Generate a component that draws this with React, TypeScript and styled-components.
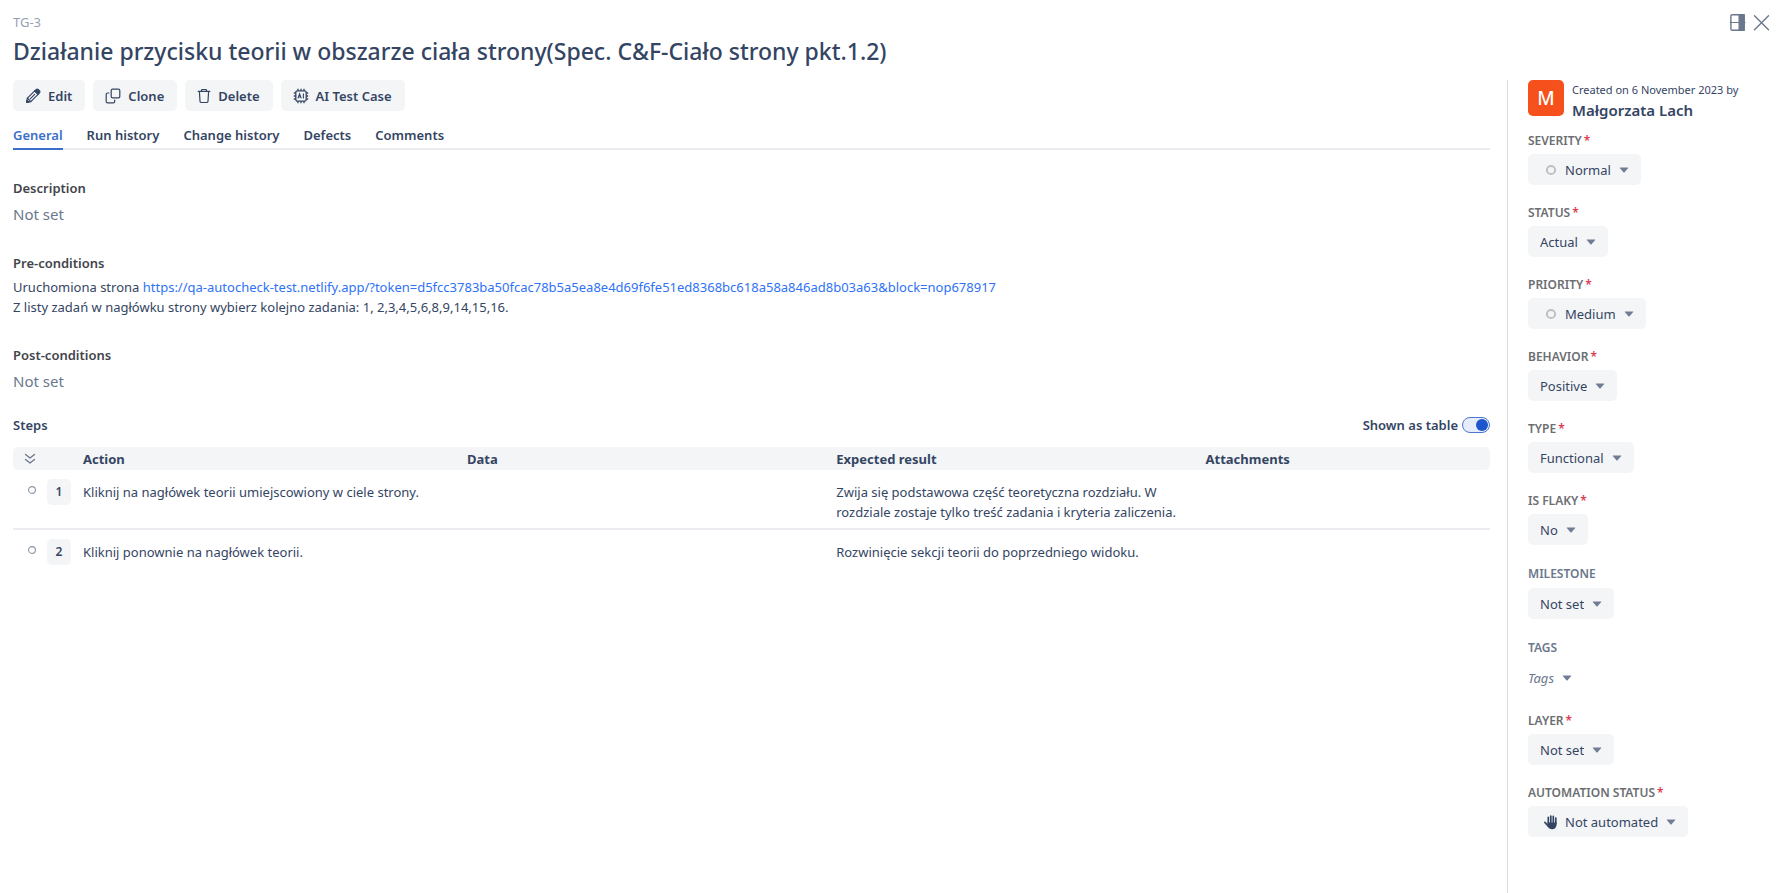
import React, { useId, useState } from "react";
import styled, { createGlobalStyle, css } from "styled-components";

const color = {
  text: "#344563",
  muted: "#6b778c",
  faint: "#97a0af",
  neutral: "#6c6e72",
  surface: "#f4f5f7",
  line: "#ebecf0",
  link: "#2f72f5",
  active: "#3b6fc9",
  danger: "#de3a50",
};

const GlobalStyle = createGlobalStyle`
  *, *::before, *::after { box-sizing: border-box; }
  body {
    margin: 0;
    background: #fff;
    color: ${color.text};
    font: 400 13px/20px "Noto Sans", "Open Sans", sans-serif;
  }
  button, input, select { font: inherit; color: inherit; }
  svg { display: block; }
`;

const Page = styled.div`
  display: flex;
  flex-direction: column;
  min-height: 100vh;
`;

const Header = styled.header`
  display: flex;
  justify-content: space-between;
  align-items: flex-start;
  padding: 12px 9px 13px 13px;
`;

const CaseId = styled.div`
  color: ${color.faint};
`;

const Title = styled.h1`
  margin: 3px 0 0;
  font-size: 23px;
  line-height: 32px;
  font-weight: 500;
`;

const WindowActions = styled.div`
  display: flex;
  gap: 7px;
`;

const IconButton = styled.button`
  display: flex;
  padding: 0;
  border: 0;
  background: none;
  color: ${color.muted};
  cursor: pointer;
`;

const Body = styled.div`
  flex: 1;
  display: grid;
  grid-template-columns: minmax(0, 1fr) 272px;
`;

const Main = styled.main`
  padding: 0 17px 24px 13px;
`;

const Toolbar = styled.div`
  display: flex;
  gap: 8px;
`;

const ToolButton = styled.button`
  display: flex;
  align-items: center;
  gap: 7px;
  height: 31px;
  padding: 0 13px 0 12px;
  border: 0;
  border-radius: 5px;
  background: ${color.surface};
  font-weight: 600;
  cursor: pointer;
`;

const Tabs = styled.nav`
  display: flex;
  gap: 24px;
  margin-top: 14px;
  border-bottom: 2px solid ${color.line};
`;

const Tab = styled.a<{ $active?: boolean }>`
  margin-bottom: -2px;
  padding-bottom: 3px;
  border-bottom: 2px solid ${(p) => (p.$active ? color.active : "transparent")};
  color: ${(p) => (p.$active ? color.active : color.text)};
  font-weight: 600;
  text-decoration: none;
`;

const Section = styled.section`
  margin-top: 28px;
`;

const SectionTitle = styled.h2`
  margin: 0;
  color: #42454b;
  font-size: 13px;
  line-height: 20px;
  font-weight: 600;
`;

const Empty = styled.p`
  margin: 5px 0 0;
  color: ${color.muted};
  font-size: 15px;
  line-height: 22px;
`;

const Paragraph = styled.p`
  margin: 4px 0 0;
`;

const Link = styled.a`
  color: ${color.link};
  text-decoration: none;
`;

const StepsBar = styled.div`
  display: flex;
  justify-content: space-between;
  align-items: center;
  margin-top: 23px;
`;

const StepsTitle = styled(SectionTitle)`
  color: ${color.text};
`;

const SwitchLabel = styled.label`
  display: flex;
  align-items: center;
  gap: 4px;
  font-weight: 600;
`;

const Switch = styled.input`
  appearance: none;
  display: flex;
  align-items: center;
  width: 28px;
  height: 16px;
  margin: 0;
  padding: 0 1px;
  border: 1px solid #4a76d4;
  border-radius: 8px;
  background: #e6ecfa;
  cursor: pointer;

  &::before {
    content: "";
    width: 12px;
    height: 12px;
    border-radius: 6px;
    background: #1d55cf;
  }
  &:checked { justify-content: flex-end; }
`;

const StepTable = styled.table`
  width: 100%;
  margin-top: 12px;
  table-layout: fixed;
  border-collapse: separate;
  border-spacing: 0;
`;

const Th = styled.th<{ $width?: string }>`
  width: ${(p) => p.$width ?? "auto"};
  height: 23px;
  padding: 0;
  background: ${color.surface};
  font-weight: 700;
  text-align: left;

  &:first-child { border-radius: 5px 0 0 5px; }
  &:last-child { border-radius: 0 5px 5px 0; }
`;

const Td = styled.td<{ $kind?: "toggle" | "number" }>`
  padding: 12px 0 6px;
  vertical-align: top;

  tr:not(:last-child) > & { border-bottom: 2px solid ${color.line}; }

  ${(p) => p.$kind === "toggle" && css`padding: 14px 0 0 13px;`}
  ${(p) => p.$kind === "number" && css`padding: 9px 0 6px;`}
`;

const HeadIcon = styled(IconButton)`
  padding-left: 10px;
`;

const StepNumber = styled.div`
  width: 24px;
  height: 26px;
  border-radius: 5px;
  background: ${color.surface};
  font-size: 12px;
  line-height: 26px;
  font-weight: 600;
  text-align: center;
`;

const Sidebar = styled.aside`
  padding: 0 8px 24px 20px;
  border-left: 1px solid #dcdee2;
`;

const Author = styled.div`
  display: flex;
  gap: 8px;
  margin-bottom: 13px;
`;

const Avatar = styled.div`
  width: 36px;
  height: 36px;
  border-radius: 5px;
  background: #f6511d;
  color: #fff;
  font-size: 19px;
  line-height: 36px;
  font-weight: 500;
  text-align: center;
`;

const Created = styled.div`
  font-size: 11px;
`;

const AuthorName = styled.div`
  font-size: 15px;
  font-weight: 600;
`;

const FieldBox = styled.div`
  margin-bottom: 20px;
`;

const FieldLabel = styled.label<{ $required: boolean }>`
  display: block;
  color: ${(p) => (p.$required ? color.neutral : color.muted)};
  font-size: 12px;
  line-height: ${(p) => (p.$required ? 16 : 18)}px;
  font-weight: 600;
  text-transform: uppercase;
`;

const Star = styled.span`
  margin-left: 2px;
  color: ${color.danger};
`;

const SelectBox = styled.div`
  display: inline-grid;
  align-items: center;
  margin-top: 5px;
  vertical-align: top;

  > * { grid-area: 1 / 1; }
`;

const Select = styled.select<{ $icon: boolean; $plain: boolean }>`
  appearance: none;
  field-sizing: content;
  height: 31px;
  padding: 0 30px 0 ${(p) => (p.$plain ? 0 : p.$icon ? 37 : 12)}px;
  border: 0;
  border-radius: 5px;
  background: ${(p) => (p.$plain ? "transparent" : color.surface)};
  ${(p) => p.$plain && css`color: ${color.muted}; font-style: italic;`}
  cursor: pointer;
`;

const Lead = styled.span`
  display: flex;
  margin-left: 15px;
  pointer-events: none;
`;

const Caret = styled.svg`
  justify-self: end;
  margin-right: 12px;
  fill: #707d95;
  pointer-events: none;
`;

const EditIcon = () => (
  <svg width="16" height="16" viewBox="0 0 16 16" fill="none" stroke="currentColor" strokeWidth="1.2" strokeLinejoin="round" strokeLinecap="round">
    <path d="M1.6 14.4l.8-4.2 7.3-7.3 3.4 3.4-7.3 7.3z" />
    <path d="M9.7 2.9l1.4-1.3a1.6 1.6 0 0 1 2.2 0l1.1 1.1a1.6 1.6 0 0 1 0 2.2l-1.3 1.4z" fill="currentColor" />
    <path d="M5.2 10.8l4.5-4.5M2.4 10.2l3.4 3.4" />
    <path d="M1.6 14.4l.5-2.3 1.8 1.8z" fill="currentColor" />
  </svg>
);

const CloneIcon = () => (
  <svg width="16" height="16" viewBox="0 0 16 16" fill="none" stroke="currentColor" strokeWidth="1.2">
    <rect x="6.2" y="1.2" width="8.6" height="8.6" rx="1.4" />
    <path d="M3.9 5H2.6a1.4 1.4 0 0 0-1.4 1.4v7a1.4 1.4 0 0 0 1.4 1.4h5.7a1.4 1.4 0 0 0 1.4-1.4v-1.3" strokeLinecap="round" />
  </svg>
);

const DeleteIcon = () => (
  <svg width="14" height="16" viewBox="0 0 14 16" fill="none" stroke="currentColor" strokeWidth="1.2" strokeLinecap="round" strokeLinejoin="round">
    <path d="M1.2 3.4h11.6M4.2 3.4l.6-1.9h4.4l.6 1.9M2.4 3.4l.6 9.8a1.4 1.4 0 0 0 1.4 1.3h5.2a1.4 1.4 0 0 0 1.4-1.3l.6-9.8" />
  </svg>
);

const ChipIcon = () => (
  <svg width="16" height="16" viewBox="0 0 16 16" fill="none" stroke="currentColor" strokeWidth="1.3">
    <rect x="2.8" y="2.8" width="10.4" height="10.4" rx="1.6" />
    <path d="M5 .8v2M8 .8v2M11 .8v2M5 13.2v2M8 13.2v2M11 13.2v2M.8 5h2M.8 8h2M.8 11h2M13.2 5h2M13.2 8h2M13.2 11h2" />
    <path d="M4.9 10.4l1.7-4.6 1.7 4.6M5.5 9h2.2M10.4 5.6v4.9" strokeWidth="1.1" />
  </svg>
);

const PanelIcon = () => (
  <svg width="17" height="20" viewBox="0 0 17 20" fill="none" stroke="currentColor" strokeWidth="1.4">
    <rect x="1.9" y="2.8" width="13.2" height="15.4" rx="1.2" />
    <path d="M10.2 2.8h4.9v15.4h-4.9z" fill="currentColor" />
    <path d="M.8 10.5H10M15 10.5h1.5" strokeWidth="1" />
  </svg>
);

const CloseIcon = () => (
  <svg width="17" height="20" viewBox="0 0 17 20" fill="none" stroke="currentColor" strokeWidth="1.4" strokeLinecap="round">
    <path d="M1.5 3.8l14 14M15.5 3.8l-14 14" />
  </svg>
);

const ExpandIcon = () => (
  <svg width="14" height="14" viewBox="0 0 14 14" fill="none" stroke="currentColor" strokeWidth="1.3" strokeLinecap="round" strokeLinejoin="round">
    <path d="M2.5 2.5L7 6l4.5-3.5M2.5 7.5L7 11l4.5-3.5" />
  </svg>
);

const StepIcon = () => (
  <svg width="12" height="12" viewBox="0 0 12 12" fill="none" stroke="#8993a4" strokeWidth="1.1">
    <circle cx="6" cy="6" r="3.4" />
  </svg>
);

const RingIcon = () => (
  <svg width="16" height="16" viewBox="0 0 16 16" fill="none" stroke="#bfc0c2" strokeWidth="2">
    <circle cx="8" cy="8" r="4.1" />
  </svg>
);

const HandIcon = () => (
  <svg width="16" height="16" viewBox="0 0 16 16" fill="none" stroke="currentColor" strokeWidth="1.7" strokeLinecap="round">
    <path d="M5.3 3.3V9M7.8 2V9M10.3 2.3V9M12.8 4V9.5M1.9 8.4l3 3.4" />
    <path d="M4.5 8.5h9.1v1.7c0 3-1.8 5-4.6 5-2.2 0-3.4-.9-4.5-2.6z" fill="currentColor" stroke="none" />
  </svg>
);

type FieldProps = {
  label: string;
  value: string;
  required?: boolean;
  plain?: boolean;
  icon?: React.ReactNode;
};

function Field({ label, value, required = false, plain = false, icon }: FieldProps) {
  const id = useId();
  return (
    <FieldBox>
      <FieldLabel htmlFor={id} $required={required}>
        {label}
        {required && <Star>*</Star>}
      </FieldLabel>
      <SelectBox>
        <Select id={id} $icon={Boolean(icon)} $plain={plain}>
          <option>{value}</option>
        </Select>
        {icon && <Lead>{icon}</Lead>}
        <Caret width="10" height="6" viewBox="0 0 10 6">
          <path d="M1.2.4h7.6q.9 0 .4.7L5.6 5.3q-.6.6-1.2 0L.8 1.1Q.3.4 1.2.4z" />
        </Caret>
      </SelectBox>
    </FieldBox>
  );
}

const tools = [
  { label: "Edit", icon: <EditIcon /> },
  { label: "Clone", icon: <CloneIcon /> },
  { label: "Delete", icon: <DeleteIcon /> },
  { label: "AI Test Case", icon: <ChipIcon /> },
];

const tabs = ["General", "Run history", "Change history", "Defects", "Comments"];

const steps = [
  {
    action: "Kliknij na nagłówek teorii umiejscowiony w ciele strony.",
    expected:
      "Zwija się podstawowa część teoretyczna rozdziału. W rozdziale zostaje tylko treść zadania i kryteria zaliczenia.",
  },
  {
    action: "Kliknij ponownie na nagłówek teorii.",
    expected: "Rozwinięcie sekcji teorii do poprzedniego widoku.",
  },
];

const fields: FieldProps[] = [
  { label: "Severity", value: "Normal", required: true, icon: <RingIcon /> },
  { label: "Status", value: "Actual", required: true },
  { label: "Priority", value: "Medium", required: true, icon: <RingIcon /> },
  { label: "Behavior", value: "Positive", required: true },
  { label: "Type", value: "Functional", required: true },
  { label: "Is flaky", value: "No", required: true },
  { label: "Milestone", value: "Not set" },
  { label: "Tags", value: "Tags", plain: true },
  { label: "Layer", value: "Not set", required: true },
  { label: "Automation status", value: "Not automated", required: true, icon: <HandIcon /> },
];

const caseUrl =
  "https://qa-autocheck-test.netlify.app/?token=d5fcc3783ba50fcac78b5a5ea8e4d69f6fe51ed8368bc618a58a846ad8b03a63&block=nop678917";

export default function App() {
  const [asTable, setAsTable] = useState(true);

  return (
    <>
      <GlobalStyle />
      <Page>
        <Header>
          <div>
            <CaseId>TG-3</CaseId>
            <Title>Działanie przycisku teorii w obszarze ciała strony(Spec. C&amp;F-Ciało strony pkt.1.2)</Title>
          </div>
          <WindowActions>
            <IconButton aria-label="Toggle side panel"><PanelIcon /></IconButton>
            <IconButton aria-label="Close"><CloseIcon /></IconButton>
          </WindowActions>
        </Header>
        <Body>
          <Main>
            <Toolbar>
              {tools.map((t) => (
                <ToolButton key={t.label}>{t.icon}{t.label}</ToolButton>
              ))}
            </Toolbar>
            <Tabs>
              {tabs.map((t, i) => (
                <Tab key={t} href="#" $active={i === 0}>{t}</Tab>
              ))}
            </Tabs>
            <Section>
              <SectionTitle>Description</SectionTitle>
              <Empty>Not set</Empty>
            </Section>
            <Section>
              <SectionTitle>Pre-conditions</SectionTitle>
              <Paragraph>
                Uruchomiona strona <Link href={caseUrl}>{caseUrl}</Link>
                <br />Z listy zadań w nagłówku strony wybierz kolejno zadania: 1, 2,3,4,5,6,8,9,14,15,16.
              </Paragraph>
            </Section>
            <Section>
              <SectionTitle>Post-conditions</SectionTitle>
              <Empty>Not set</Empty>
            </Section>
            <StepsBar>
              <StepsTitle>Steps</StepsTitle>
              <SwitchLabel>
                Shown as table
                <Switch
                  type="checkbox"
                  role="switch"
                  checked={asTable}
                  onChange={(e) => setAsTable(e.target.checked)}
                />
              </SwitchLabel>
            </StepsBar>
            <StepTable>
              <thead>
                <tr>
                  <Th $width="34px"><HeadIcon aria-label="Expand all"><ExpandIcon /></HeadIcon></Th>
                  <Th $width="36px" />
                  <Th $width="26%">Action</Th>
                  <Th $width="25%">Data</Th>
                  <Th $width="25%">Expected result</Th>
                  <Th>Attachments</Th>
                </tr>
              </thead>
              <tbody>
                {steps.map((s, i) => (
                  <tr key={s.action}>
                    <Td $kind="toggle"><StepIcon /></Td>
                    <Td $kind="number"><StepNumber>{i + 1}</StepNumber></Td>
                    <Td>{s.action}</Td>
                    <Td />
                    <Td>{s.expected}</Td>
                    <Td />
                  </tr>
                ))}
              </tbody>
            </StepTable>
          </Main>
          <Sidebar>
            <Author>
              <Avatar>M</Avatar>
              <div>
                <Created>Created on 6 November 2023 by</Created>
                <AuthorName>Małgorzata Lach</AuthorName>
              </div>
            </Author>
            {fields.map((f) => (
              <Field key={f.label} {...f} />
            ))}
          </Sidebar>
        </Body>
      </Page>
    </>
  );
}
